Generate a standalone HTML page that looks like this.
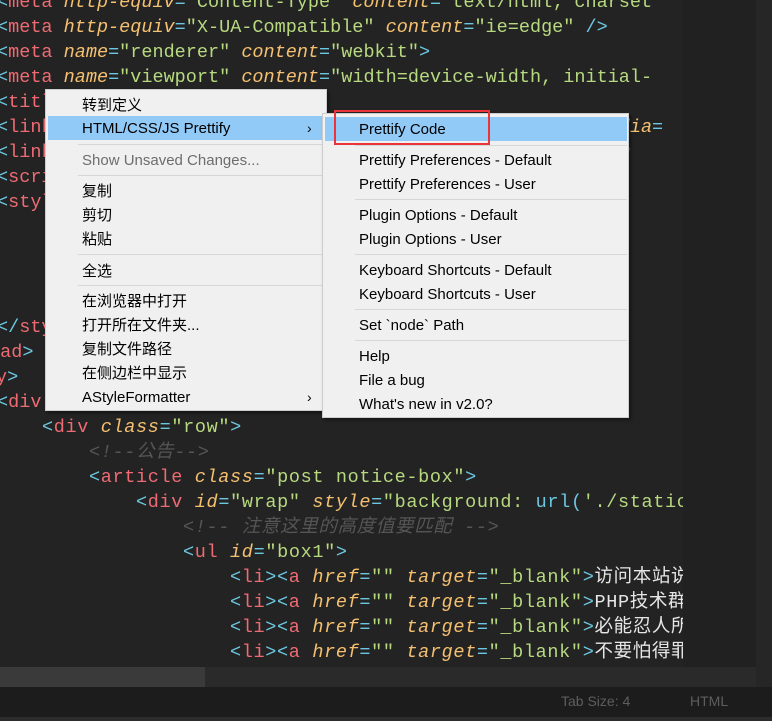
<!DOCTYPE html>
<html><head><meta charset="utf-8"><style>
*{margin:0;padding:0;box-sizing:border-box}
body{width:772px;height:721px;overflow:hidden;background:#232323;position:relative;font-family:"Liberation Sans","Noto Sans CJK SC",sans-serif}
.code{position:absolute;left:0;top:0;width:683px;height:667px;overflow:hidden;background:#232323}
.l{position:absolute;white-space:pre;font-family:"Liberation Mono","Noto Sans CJK SC",monospace;font-size:18.5px;line-height:25px;height:25px}
.lo{letter-spacing:0.65px}
.t{color:#ef6b73}.a{color:#f5c06f;font-style:italic}.s{color:#b7d97f}.p{color:#6cc7e0}.c{color:#555}.w{color:#e6e6e6}.u{color:#6cc7e0}
.mini{position:absolute;left:683px;top:0;width:73px;height:667px;background:#212121}
.vs{position:absolute;left:756px;top:0;width:16px;height:687px;background:#262626}
.hs{position:absolute;left:0;top:667px;width:756px;height:20px;background:#2a2a2a}
.hs i{position:absolute;left:0;top:0;width:205px;height:20px;background:#3a3a3a}
.status{position:absolute;left:0;top:687px;width:772px;height:30px;background:#1c1c1c;color:#5e5e5e;font-size:14px}
.bot{position:absolute;left:0;top:717px;width:772px;height:4px;background:#2c2c2c}
.menu{position:absolute;background:#f0f0f0;border:1px solid #cdcdcd;box-shadow:2px 2px 3px rgba(0,0,0,.45);font-size:15px;color:#000}
.it{position:absolute;height:24px;line-height:26px;white-space:nowrap}
.sep{position:absolute;height:1px;background:#d7d7d7}
.hl{position:absolute;background:#91c9f7}
</style></head><body>
<div class="code">
<div class="l" style="left:-3px;top:-10px"><span class="p">&lt;</span><span class="t">meta</span> <span class="a">http-equiv</span><span class="p">=</span><span class="s">"Content-Type"</span> <span class="a">content</span><span class="p">=</span><span class="s">"text/html; charset</span></div>
<div class="l" style="left:-3px;top:15px"><span class="p">&lt;</span><span class="t">meta</span> <span class="a">http-equiv</span><span class="p">=</span><span class="s">"X-UA-Compatible"</span> <span class="a">content</span><span class="p">=</span><span class="s">"ie=edge"</span> <span class="p">/&gt;</span></div>
<div class="l" style="left:-3px;top:40px"><span class="p">&lt;</span><span class="t">meta</span> <span class="a">name</span><span class="p">=</span><span class="s">"renderer"</span> <span class="a">content</span><span class="p">=</span><span class="s">"webkit"</span><span class="p">&gt;</span></div>
<div class="l" style="left:-3px;top:65px"><span class="p">&lt;</span><span class="t">meta</span> <span class="a">name</span><span class="p">=</span><span class="s">"viewport"</span> <span class="a">content</span><span class="p">=</span><span class="s">"width=device-width, initial-</span></div>
<div class="l" style="left:-3px;top:90px"><span class="p">&lt;</span><span class="t">title</span></div>
<div class="l" style="left:-3px;top:115px"><span class="p">&lt;</span><span class="t">link</span>                                                 <span class="a">media</span><span class="p">=</span></div>
<div class="l" style="left:-3px;top:140px"><span class="p">&lt;</span><span class="t">link</span>                                               <span class="s">et"</span> <span class="a">m</span></div>
<div class="l" style="left:-3px;top:165px"><span class="p">&lt;</span><span class="t">script</span></div>
<div class="l" style="left:-3px;top:190px"><span class="p">&lt;</span><span class="t">style</span></div>
<div class="l" style="left:-3px;top:315px"><span class="p">&lt;/</span><span class="t">style</span></div>
<div class="l" style="left:-11px;top:340px"><span class="t">ead</span><span class="p">&gt;</span></div>
<div class="l" style="left:-4px;top:365px"><span class="t">y</span><span class="p">&gt;</span></div>
<div class="l" style="left:-3px;top:390px"><span class="p">&lt;</span><span class="t">div</span></div>
<div class="l lo" style="left:42px;top:415px"><span class="p">&lt;</span><span class="t">div</span> <span class="a">class</span><span class="p">=</span><span class="s">"row"</span><span class="p">&gt;</span></div>
<div class="l lo c" style="left:89px;top:440px;font-style:italic">&lt;!--公告--&gt;</div>
<div class="l lo" style="left:89px;top:465px"><span class="p">&lt;</span><span class="t">article</span> <span class="a">class</span><span class="p">=</span><span class="s">"post notice-box"</span><span class="p">&gt;</span></div>
<div class="l lo" style="left:136px;top:490px"><span class="p">&lt;</span><span class="t">div</span> <span class="a">id</span><span class="p">=</span><span class="s">"wrap"</span> <span class="a">style</span><span class="p">=</span><span class="s">"background: </span><span class="u">url</span><span class="p">(</span><span class="s">'./static</span></div>
<div class="l lo c" style="left:183px;top:515px;font-style:italic">&lt;!-- 注意这里的高度值要匹配 --&gt;</div>
<div class="l lo" style="left:183px;top:540px"><span class="p">&lt;</span><span class="t">ul</span> <span class="a">id</span><span class="p">=</span><span class="s">"box1"</span><span class="p">&gt;</span></div>
<div class="l lo" style="left:230px;top:565px"><span class="p">&lt;</span><span class="t">li</span><span class="p">&gt;&lt;</span><span class="t">a</span> <span class="a">href</span><span class="p">=</span><span class="s">""</span> <span class="a">target</span><span class="p">=</span><span class="s">"_blank"</span><span class="p">&gt;</span><span class="w">访问本站说</span></div>
<div class="l lo" style="left:230px;top:590px"><span class="p">&lt;</span><span class="t">li</span><span class="p">&gt;&lt;</span><span class="t">a</span> <span class="a">href</span><span class="p">=</span><span class="s">""</span> <span class="a">target</span><span class="p">=</span><span class="s">"_blank"</span><span class="p">&gt;</span><span class="w">PHP技术群</span></div>
<div class="l lo" style="left:230px;top:615px"><span class="p">&lt;</span><span class="t">li</span><span class="p">&gt;&lt;</span><span class="t">a</span> <span class="a">href</span><span class="p">=</span><span class="s">""</span> <span class="a">target</span><span class="p">=</span><span class="s">"_blank"</span><span class="p">&gt;</span><span class="w">必能忍人所</span></div>
<div class="l lo" style="left:230px;top:640px"><span class="p">&lt;</span><span class="t">li</span><span class="p">&gt;&lt;</span><span class="t">a</span> <span class="a">href</span><span class="p">=</span><span class="s">""</span> <span class="a">target</span><span class="p">=</span><span class="s">"_blank"</span><span class="p">&gt;</span><span class="w">不要怕得罪</span></div>
</div>
<div class="mini"></div><div class="vs"></div>
<div class="hs"><i></i></div>
<div class="status"><span style="position:absolute;left:561px;top:6px">Tab Size: 4</span><span style="position:absolute;left:690px;top:6px">HTML</span></div>
<div class="bot"></div>

<div class="menu" style="left:45px;top:89px;width:282px;height:322px">
<div class="hl" style="left:2px;top:26px;width:276px;height:24px"></div>
<div class="it" style="left:36px;top:3px">转到定义</div>
<div class="it" style="left:36px;top:26px">HTML/CSS/JS Prettify</div>
<div class="it" style="left:261px;top:25px;font-size:14px">›</div>
<div class="sep" style="left:32px;top:54px;width:244px"></div>
<div class="it" style="left:36px;top:58px;color:#6d6d6d">Show Unsaved Changes...</div>
<div class="sep" style="left:32px;top:85px;width:244px"></div>
<div class="it" style="left:36px;top:89px">复制</div>
<div class="it" style="left:36px;top:113px">剪切</div>
<div class="it" style="left:36px;top:137px">粘贴</div>
<div class="sep" style="left:32px;top:164px;width:244px"></div>
<div class="it" style="left:36px;top:169px">全选</div>
<div class="sep" style="left:32px;top:195px;width:244px"></div>
<div class="it" style="left:36px;top:199px">在浏览器中打开</div>
<div class="it" style="left:36px;top:223px">打开所在文件夹...</div>
<div class="it" style="left:36px;top:247px">复制文件路径</div>
<div class="it" style="left:36px;top:271px">在侧边栏中显示</div>
<div class="it" style="left:36px;top:295px">AStyleFormatter</div>
<div class="it" style="left:261px;top:294px;font-size:14px">›</div>
</div>

<div class="menu" style="left:322px;top:113px;width:307px;height:305px">
<div class="hl" style="left:2px;top:3px;width:302px;height:24px"></div>
<div class="it" style="left:36px;top:3px">Prettify Code</div>
<div class="sep" style="left:32px;top:31px;width:272px"></div>
<div class="it" style="left:36px;top:34px">Prettify Preferences - Default</div>
<div class="it" style="left:36px;top:58px">Prettify Preferences - User</div>
<div class="sep" style="left:32px;top:85px;width:272px"></div>
<div class="it" style="left:36px;top:89px">Plugin Options - Default</div>
<div class="it" style="left:36px;top:113px">Plugin Options - User</div>
<div class="sep" style="left:32px;top:140px;width:272px"></div>
<div class="it" style="left:36px;top:144px">Keyboard Shortcuts - Default</div>
<div class="it" style="left:36px;top:168px">Keyboard Shortcuts - User</div>
<div class="sep" style="left:32px;top:195px;width:272px"></div>
<div class="it" style="left:36px;top:199px">Set `node` Path</div>
<div class="sep" style="left:32px;top:226px;width:272px"></div>
<div class="it" style="left:36px;top:230px">Help</div>
<div class="it" style="left:36px;top:254px">File a bug</div>
<div class="it" style="left:36px;top:278px">What's new in v2.0?</div>
</div>
<div style="position:absolute;left:334px;top:110px;width:156px;height:35px;border:2px solid #e8343a"></div>
</body></html>
